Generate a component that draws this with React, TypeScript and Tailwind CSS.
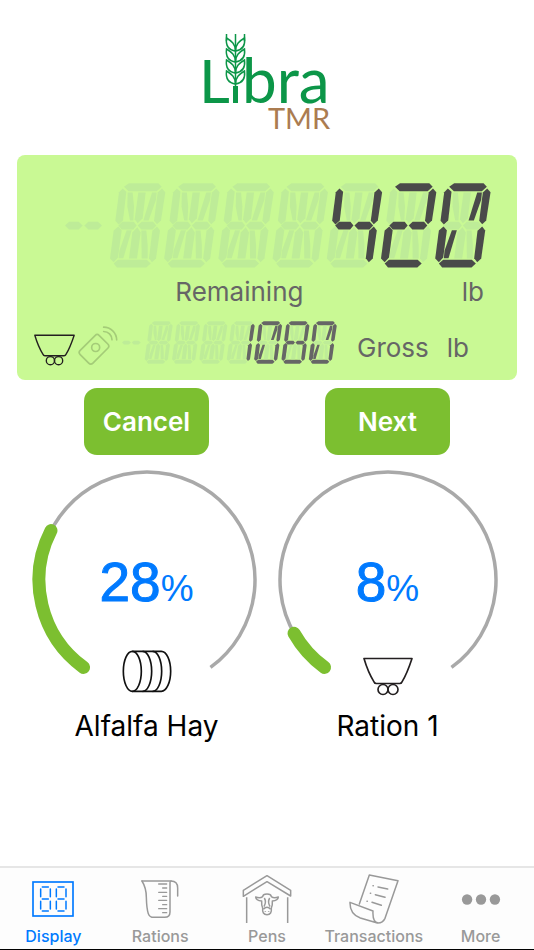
import { ReactNode } from 'react'

type IconProps = { className?: string }

// Outline of every segment in a 168 x 254 digit cell
const SEGMENTS: Record<string, string> = {
  a: '43,11 58,0 146,0 156,11 141,24 57,24',
  b: '157,16 167,27 154,112 142,123 133,113 144,28',
  c: '142,130 151,142 139,226 127,237 118,225 128,143',
  d: '12,241 25,230 111,230 123,241 110,253 22,253',
  e: '26,130 36,141 25,223 12,237 1,226 12,142',
  f: '39,16 50,26 40,112 27,124 17,113 28,27',
  g: '26,127 38,116 72,116 81,127 71,139 36,139',
  h: '84,127 96,116 130,116 140,127 129,139 95,139',
  i: '54,28 69,28 73,70 71,112 61,112 53,70',
  j: '86,28 108,28 99,105 84,120 75,108',
  k: '127,28 141,28 139,50 117,112 101,112',
  l: '51,141 66,141 41,225 27,225 29,203',
  m: '83,132 93,148 82,226 58,226 68,148',
  n: '95,142 110,142 114,185 114,226 96,226',
}

const DIGITS: Record<string, string> = {
  '0': 'abcdefkl',
  '1': 'bc',
  '2': 'abghed',
  '4': 'fbghc',
  '8': 'abcdefgh',
}

const CELLS = 7

function SegmentDisplay({ value, litClass, className }: { value: string; litClass: string; className: string }) {
  const chars = value.padStart(CELLS, ' ').split('')
  return (
    <svg viewBox="0 0 1278 254" className={className} role="img" aria-label={value}>
      <g className="fill-[#beec98]">
        <polygon points="0,127 12,116 41,116 53,127 41,139 12,139" />
        <polygon points="58,127 70,116 99,116 111,127 99,139 70,139" />
      </g>
      {chars.map((char, i) => {
        const lit = DIGITS[char] ?? ''
        return (
          <g key={i} transform={`translate(${134 + i * 162.6} 0)`}>
            {Object.entries(SEGMENTS).map(([name, points]) => (
              <polygon key={name} points={points} className={lit.includes(name) ? litClass : 'fill-[#beec98]'} />
            ))}
          </g>
        )
      })}
    </svg>
  )
}

function Logo() {
  return (
    <svg viewBox="-8 0 144 104" className="h-[104px] w-36" role="img" aria-label="Libra TMR">
      <g className="fill-[#0c9648] font-['Lato']">
        <text x="-4" y="71" fontSize="60">L</text>
        <rect x="30" y="54" width="5" height="17" />
        <text x="39" y="71" fontSize="62">bra</text>
      </g>
      <text x="65" y="97" fontSize="29" className="fill-[#ab7c50] font-['Lato']">TMR</text>
      <g transform="translate(32.5 0)" fill="none" stroke="#0c9648" strokeWidth="1.5">
        <path d="M0 2V54M-9 2V9M9 2V9" />
        {[19, 30, 41, 52].map((y) => (
          <g key={y} transform={`translate(0 ${y})`}>
            <path d="M0 0C-7-1-10-5-9-13C-4-10 0-7 0 0Z" />
            <path d="M0 0C7-1 10-5 9-13C4-10 0-7 0 0Z" />
          </g>
        ))}
      </g>
    </svg>
  )
}

function WagonIcon({ className }: IconProps) {
  return (
    <svg viewBox="0 0 150 116" className={className} fill="none" stroke="#231f20" strokeWidth="5" strokeLinejoin="round" aria-hidden="true">
      <path d="M3 4H147Q132 50 117 74Q115 79 110 79H40Q35 79 33 74Q15 45 3 4Z" />
      <circle cx="60" cy="97" r="15" />
      <circle cx="90" cy="97" r="15" />
    </svg>
  )
}

function BaleIcon({ className }: IconProps) {
  return (
    <svg viewBox="0 0 150 138" className={className} fill="none" stroke="#111" strokeWidth="5" aria-hidden="true">
      <ellipse cx="31" cy="64" rx="27" ry="60" />
      <path d="M31 4H118A28 60 0 0 1 118 124H31" />
      <path d="M62 4A27 60 0 0 1 62 124M92 4A27 60 0 0 1 92 124" />
    </svg>
  )
}

function RemoteIcon({ className }: IconProps) {
  return (
    <svg viewBox="0 0 120 119" className={className} fill="none" stroke="#a4cc78" strokeWidth="5" strokeLinecap="round" aria-hidden="true">
      <rect x="21" y="29" width="54" height="81" rx="9" transform="rotate(45 48 69.5)" />
      <circle cx="53" cy="64" r="12" />
      <path d="M77 3A39 39 0 0 1 116 41M77 16A25 25 0 0 1 102 41" />
    </svg>
  )
}

function DisplayIcon() {
  return (
    <svg viewBox="0 0 126 108" className="h-9 w-[42px]" fill="none" stroke="currentColor" strokeWidth="5" aria-hidden="true">
      <rect x="3" y="3" width="120" height="102" />
      {[24, 71].map((x) => (
        <path
          key={x}
          transform={`translate(${x} 16)`}
          strokeLinecap="round"
          strokeWidth="4.5"
          d="M7 2H25M7 38H25M7 74H25M2 8V31M31 8V31M2 45V68M31 45V68"
        />
      ))}
    </svg>
  )
}

function JugIcon() {
  return (
    <svg viewBox="0 0 114 117" className="h-[39px] w-[38px]" fill="none" stroke="currentColor" strokeWidth="4.5" strokeLinecap="round" strokeLinejoin="round" aria-hidden="true">
      <path d="M3 3H90Q110 3 110 24V48" />
      <path d="M3 3Q16 24 16 52Q17 88 22 101Q26 112 38 112H71Q87 112 87 96V8Q87 5 90 3" />
      <path strokeWidth="4" d="M53 12H77M65 24H77M53 37H77M65 49H77M53 61H77M65 74H77M53 86H77M65 98H77" />
    </svg>
  )
}

function BarnIcon() {
  return (
    <svg viewBox="0 0 150 150" className="size-[50px]" fill="none" stroke="currentColor" strokeWidth="4.5" strokeLinejoin="round" aria-hidden="true">
      <path d="M4 49L75 5L146 49V66L75 23L4 67Z" />
      <path d="M14 70V147M137 70V147" />
      <path d="M62 68Q63 60 75 60Q87 60 88 68Q96 74 109 69Q108 80 91 81Q92 93 88 102Q90 122 75 122Q60 122 62 102Q58 93 59 81Q42 80 41 69Q54 74 62 68Z" />
      <path d="M67 72Q74 84 66 98M83 72Q76 84 84 98M64 106Q75 93 86 106M70 112V114M80 112V114" />
    </svg>
  )
}

function ReceiptIcon() {
  return (
    <svg viewBox="0 0 150 150" className="size-[50px]" fill="none" stroke="currentColor" strokeWidth="4.5" strokeLinecap="round" strokeLinejoin="round" aria-hidden="true">
      <path d="M31 90L61 3L147 20L108 133Q101 148 85 147L34 132Q2 121 3 85L72 111Q70 145 88 147" />
      <path d="M72 35H73M87 39L116 45M64 58H65M79 62L108 70M54 82H55M69 85L97 94" />
    </svg>
  )
}

function MoreIcon() {
  return (
    <svg viewBox="0 0 120 34" className="h-[11px] w-10" fill="currentColor" aria-hidden="true">
      <circle cx="17" cy="17" r="16" />
      <circle cx="60" cy="17" r="16" />
      <circle cx="103" cy="17" r="16" />
    </svg>
  )
}

const RADIUS = 108
const START = 36
const SWEEP = 288

// Degrees run clockwise from the bottom of the dial
function arc(from: number, to: number) {
  const point = (deg: number) => {
    const rad = (deg * Math.PI) / 180
    return `${-RADIUS * Math.sin(rad)} ${RADIUS * Math.cos(rad)}`
  }
  return `M${point(from)}A${RADIUS} ${RADIUS} 0 ${to - from > 180 ? 1 : 0} 1 ${point(to)}`
}

function Gauge({ value, label, icon }: { value: number; label: string; icon: ReactNode }) {
  return (
    <div className="flex flex-col items-center">
      <div className="grid justify-items-center">
        <svg viewBox="-116 -116 232 236" className="col-start-1 row-start-1 h-[236px] w-[232px]" fill="none" aria-hidden="true">
          <path d={arc(START, START + SWEEP)} stroke="#a9a9a9" strokeWidth="3.5" />
          <path d={arc(START, START + (SWEEP * value) / 100)} stroke="#7cbf30" strokeWidth="13" strokeLinecap="round" />
        </svg>
        <div className="col-start-1 row-start-1 flex flex-col items-center justify-between pt-[88px] pb-1">
          <p className="font-['Liberation_Sans',sans-serif] text-[55px] leading-[60px] text-[#007aff]">
            <span className="[-webkit-text-stroke:1px_#007aff]">{Math.floor(value)}</span>
            <span className="text-[37px]">%</span>
          </p>
          {icon}
        </div>
      </div>
      <p className="mt-[5px] text-[28px] leading-[42px] text-black">{label}</p>
    </div>
  )
}

const tabs = [
  { label: 'Display', icon: <DisplayIcon />, active: true },
  { label: 'Rations', icon: <JugIcon /> },
  { label: 'Pens', icon: <BarnIcon /> },
  { label: 'Transactions', icon: <ReceiptIcon /> },
  { label: 'More', icon: <MoreIcon /> },
]

function App() {
  return (
    <div className="flex min-h-screen flex-col bg-white font-['Inter',sans-serif]">
      <header className="flex justify-center pt-8">
        <Logo />
      </header>

      <main>
        <section className="mx-[17px] mt-[19px] rounded-lg bg-[#c9f994] pt-7 pb-[14px] text-[26px] leading-8 text-[#666]">
          <div className="flex justify-end pr-[26px]">
            <SegmentDisplay value="420" litClass="fill-[#4a4a4a]" className="h-[85px] w-[426px]" />
          </div>
          <div className="mt-2 flex pr-[33px]">
            <span className="flex-1 text-center">Remaining</span>
            <span>lb</span>
          </div>
          <div className="mt-[13px] flex items-end pl-[17px]">
            <WagonIcon className="h-8 w-[41px]" />
            <RemoteIcon className="ml-[3px] h-10 w-10" />
            <SegmentDisplay value="1080" litClass="fill-[#666]" className="mb-[2px] ml-1 h-[43px] w-[215px]" />
            <span className="mb-[2px] ml-5">Gross</span>
            <span className="mb-[2px] ml-[18px]">lb</span>
          </div>
        </section>

        <div className="mt-2 grid grid-cols-2 justify-items-center px-[26px]">
          <button type="button" className="h-[67px] w-[125px] rounded-[13px] bg-[#7cbf30] text-[26px] font-semibold text-white">
            Cancel
          </button>
          <button type="button" className="h-[67px] w-[125px] rounded-[13px] bg-[#7cbf30] text-[26px] font-semibold text-white">
            Next
          </button>
        </div>

        <section className="mt-[9px] grid grid-cols-2 px-[26px]">
          <Gauge value={28.2} label="Alfalfa Hay" icon={<BaleIcon className="h-[46px] w-[50px]" />} />
          <Gauge value={8.5} label="Ration 1" icon={<WagonIcon className="h-[39px] w-[50px]" />} />
        </section>
      </main>

      <nav className="mt-auto grid grid-cols-5 border-t-2 border-b border-t-[#e6e6e6] border-b-black bg-[#fdfdfd] pt-[6px] pb-[3px]">
        {tabs.map((tab) => (
          <a
            key={tab.label}
            href="#"
            aria-current={tab.active ? 'page' : undefined}
            className={`flex flex-col items-center ${tab.active ? 'text-[#007aff]' : 'text-[#999]'}`}
          >
            <span className="flex h-[50px] items-center">{tab.icon}</span>
            <span className="mt-[2px] text-base leading-5 font-medium">{tab.label}</span>
          </a>
        ))}
      </nav>
    </div>
  )
}

export default App
